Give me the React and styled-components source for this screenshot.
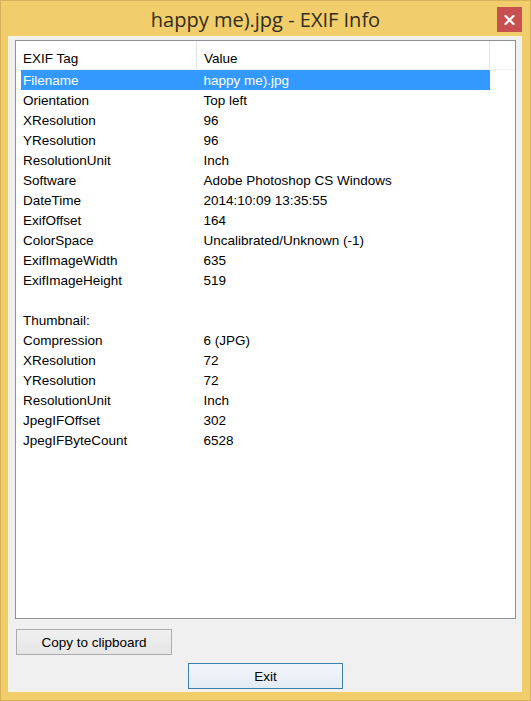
import React from 'react';
import styled, { createGlobalStyle } from 'styled-components';

const GlobalStyle = createGlobalStyle`
  html, body {
    margin: 0;
    padding: 0;
    background: #f1cd6b;
  }
`;

const Window = styled.div`
  box-sizing: border-box;
  width: 531px;
  height: 701px;
  display: flex;
  flex-direction: column;
  background: #f1cd6b;
  border: 1px solid #d8b25a;
  font-family: "Liberation Sans", Arial, sans-serif;
`;

const TitleBar = styled.div`
  height: 36px;
  display: grid;
  grid-template-columns: 1fr auto 1fr;
  align-items: center;
`;

const Title = styled.div`
  grid-column: 2;
  font-family: "Open Sans", "Noto Sans", sans-serif;
  font-size: 20px;
  color: #332e1c;
  padding-top: 2px;
`;

const CloseButton = styled.div`
  grid-column: 3;
  justify-self: end;
  align-self: start;
  margin-top: 6px;
  margin-right: 8px;
  width: 25px;
  height: 25px;
  background: #c75050;
  display: flex;
  align-items: center;
  justify-content: center;
`;

const Client = styled.div`
  flex: 1;
  margin: 0 8px 8px 7px;
  background: #f0f0f0;
  border: 1px solid #f8f3e2;
  display: flex;
  flex-direction: column;
  padding: 3px 5px 2px 6px;
`;

const ListBox = styled.div`
  height: 577px;
  background: #fff;
  border: 1px solid #8e9096;
  display: flex;
  flex-direction: column;
`;

const Header = styled.div`
  height: 28px;
  display: flex;
  border-bottom: 1px solid #f2f2f2;
  font-size: 13.5px;
  color: #000;
`;

const HeaderCell = styled.div`
  width: ${p => p.w}px;
  box-sizing: border-box;
  display: flex;
  align-items: center;
  padding-top: 6px;
  padding-left: ${p => p.pad}px;
  border-right: 1px solid #e5e5e5;
`;

const Rows = styled.div`
  padding-left: 5px;
`;

const Row = styled.div`
  display: flex;
  height: 20px;
  width: 469px;
  align-items: center;
  font-size: 13.5px;
  color: ${p => (p.selected ? '#fff' : '#000')};
  background: ${p => (p.selected ? '#3399ff' : 'transparent')};
`;

const Cell = styled.div`
  width: ${p => p.w}px;
  padding-left: 2px;
  white-space: nowrap;
`;

const Buttons = styled.div`
  display: flex;
  flex-direction: column;
`;

const Button = styled.div`
  box-sizing: border-box;
  width: ${p => p.w}px;
  height: 26px;
  display: flex;
  align-items: center;
  justify-content: center;
  font-size: 13.5px;
  color: #000;
  border: 1px solid ${p => (p.primary ? '#3c7fb1' : '#acacac')};
  background: ${p =>
    p.primary
      ? 'linear-gradient(#f1f6fb, #e3ebf3)'
      : 'linear-gradient(#f0f0f0, #e5e5e5)'};
`;

const CopyButton = styled(Button)`
  margin-top: 10px;
  margin-left: 1px;
`;

const ExitButton = styled(Button)`
  margin-top: 8px;
  align-self: center;
`;

const rows = [
  ['Filename', 'happy me).jpg'],
  ['Orientation', 'Top left'],
  ['XResolution', '96'],
  ['YResolution', '96'],
  ['ResolutionUnit', 'Inch'],
  ['Software', 'Adobe Photoshop CS Windows'],
  ['DateTime', '2014:10:09 13:35:55'],
  ['ExifOffset', '164'],
  ['ColorSpace', 'Uncalibrated/Unknown (-1)'],
  ['ExifImageWidth', '635'],
  ['ExifImageHeight', '519'],
  ['', ''],
  ['Thumbnail:', ''],
  ['Compression', '6 (JPG)'],
  ['XResolution', '72'],
  ['YResolution', '72'],
  ['ResolutionUnit', 'Inch'],
  ['JpegIFOffset', '302'],
  ['JpegIFByteCount', '6528'],
];

export default function App() {
  return (
    <>
      <GlobalStyle />
      <Window>
        <TitleBar>
          <Title>happy me).jpg - EXIF Info</Title>
          <CloseButton>
            <svg width="11" height="10" viewBox="0 0 11 10">
              <path d="M1.5 1 L9.5 9 M9.5 1 L1.5 9" stroke="#fff" strokeWidth="2.2" strokeLinecap="square" />
            </svg>
          </CloseButton>
        </TitleBar>
        <Client>
          <ListBox>
            <Header>
              <HeaderCell w={181} pad={7}>EXIF Tag</HeaderCell>
              <HeaderCell w={293} pad={7}>Value</HeaderCell>
            </Header>
            <Rows>
              {rows.map(([tag, value], i) => (
                <Row key={i} selected={i === 0}>
                  <Cell w={180}>{tag}</Cell>
                  <Cell w={289}>{value}</Cell>
                </Row>
              ))}
            </Rows>
          </ListBox>
          <Buttons>
            <CopyButton w={156}>Copy to clipboard</CopyButton>
            <ExitButton w={155} primary>Exit</ExitButton>
          </Buttons>
        </Client>
      </Window>
    </>
  );
}
